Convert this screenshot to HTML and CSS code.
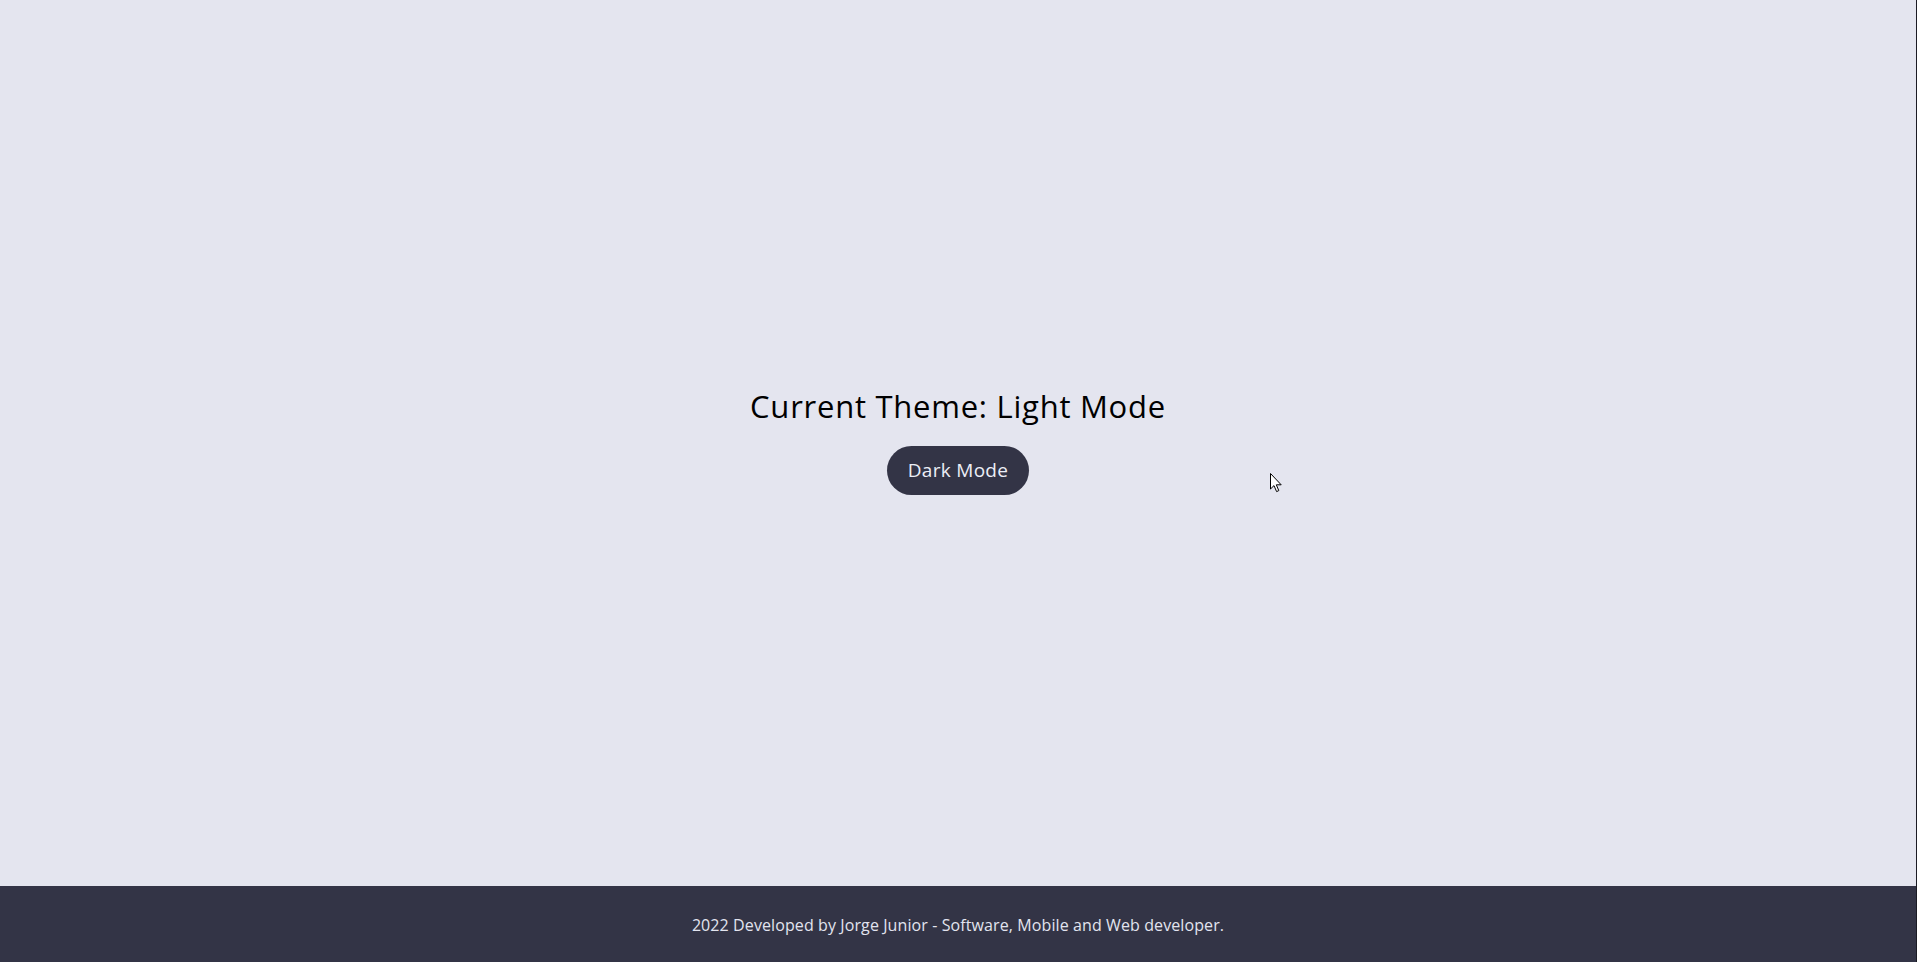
FILE: index.html
```html
<!DOCTYPE html>
<html lang="en">
<head>
<meta charset="utf-8">
<title>Theme Switcher</title>
<link rel="stylesheet" href="styles.css">
</head>
<body>
<div class="page">
  <main class="main">
    <h1 class="title">Current Theme: Light Mode</h1>
    <button class="toggle" type="button">Dark Mode</button>
  </main>
  <footer class="footer">
    <p class="footer-text">2022 Developed by Jorge Junior - Software, Mobile and Web developer.</p>
  </footer>
  <svg class="cursor" width="13" height="20" viewBox="0 0 13 20" aria-hidden="true">
    <path d="M0.5 0.5 L0.5 16 L4 12.6 L6.6 18.6 L8.8 17.6 L6.3 11.8 L11.2 11.8 Z" fill="#fff" stroke="#000" stroke-width="1" stroke-linejoin="miter"/>
  </svg>
</div>
</body>
</html>
```

FILE: styles.css
```css
html, body {
  margin: 0;
  padding: 0;
  height: 100%;
}

body {
  font-family: "Open Sans", "DejaVu Sans", sans-serif;
  background: #e4e5ef;
}

.page {
  position: relative;
  display: flex;
  flex-direction: column;
  height: 100vh;
  border-right: 1px solid #1b1b24;
  box-sizing: border-box;
}

.main {
  flex: 1;
  display: flex;
  flex-direction: column;
  align-items: center;
  justify-content: center;
  gap: 22px;
  padding-bottom: 4px;
}

.title {
  margin: 0;
  font-size: 31px;
  line-height: 36px;
  font-weight: 500;
  color: #000;
  letter-spacing: 0.75px;
}

.toggle {
  height: 49px;
  padding: 0 20px;
  min-width: 142px;
  border: none;
  border-radius: 25px;
  background: #333446;
  color: #eceef6;
  font-family: inherit;
  font-size: 19px;
  letter-spacing: 0.3px;
}

.footer {
  height: 76px;
  flex: none;
  background: #333446;
  display: flex;
  align-items: center;
  justify-content: center;
}

.footer-text {
  margin: 0;
  color: #e2e4ef;
  font-size: 16px;
  letter-spacing: 0.1px;
  padding-top: 2px;
}

.cursor {
  position: absolute;
  left: 1270px;
  top: 473px;
}
```
